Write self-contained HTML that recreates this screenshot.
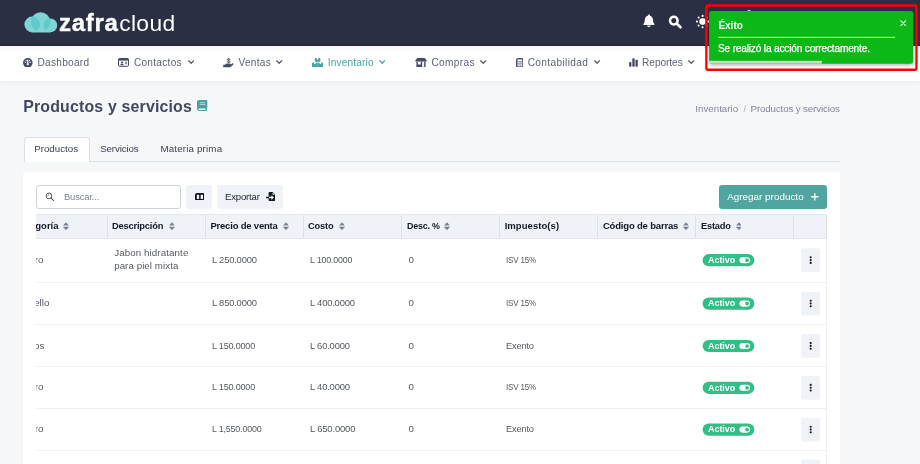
<!DOCTYPE html>
<html lang="es">
<head>
<meta charset="utf-8">
<title>Productos y servicios</title>
<style>
html,body{margin:0;padding:0}
body{width:920px;height:464px;overflow:hidden;position:relative;background:#f6f7f9;font-family:"Liberation Sans",sans-serif}
.a{position:absolute}
.t{position:absolute;white-space:nowrap;line-height:1;font-family:"Liberation Sans",sans-serif}
.hdr{left:0;top:0;width:920px;height:45.6px;background:#2a2f43}
.nav{left:0;top:45.6px;width:920px;height:35.2px;background:linear-gradient(#f6f6f9,#fff 7px);box-shadow:0 1px 4px rgba(40,50,80,.06)}
.card{left:23px;top:172px;width:817px;height:300px;background:#fff;border-radius:3px;box-shadow:0 1px 2px rgba(40,50,80,.04)}
.tabline{left:23.75px;top:161px;width:816.25px;height:1px;background:#dcdfe6}
.tabact{left:24px;top:137px;width:66px;height:25px;box-sizing:border-box;background:#fff;border:1px solid #dcdfe6;border-bottom:none;border-radius:3px 3px 0 0}
.search{left:36.25px;top:185px;width:144.5px;height:24px;box-sizing:border-box;border:1px solid #ced3db;border-radius:3px;background:#fff}
.btnl{background:#eff2f7;border-radius:3px}
.btnp{left:718.75px;top:185px;width:108.25px;height:24px;background:#50a5a1;border-radius:3px}
.thead{left:36.25px;top:214px;width:790.5px;height:24.5px;background:#eff2f7;border-top:1px solid #e3e7ee;border-bottom:1px solid #e3e7ee;box-sizing:border-box}
.vl{top:214.5px;width:1px;height:23.75px;background:#dde1e9}
.hl{left:36.25px;width:790.5px;height:1px;background:#eef0f4}
.badge{left:702.6px;width:51.75px;height:12.2px;border-radius:6.1px;background:#34bd85}
.kb{left:801.1px;width:19px;height:23.8px;border-radius:3px;background:#eff2f7}
.clip{left:36.25px;top:214.5px;width:70px;height:260px;overflow:hidden}
.toastbox{left:705.25px;top:4.75px;width:214px;height:65.75px;box-sizing:border-box;border:2.2px solid #f5000a;border-radius:2px}
.toast{left:709.4px;top:10.8px;width:204px;height:53.2px;background:#0db417;border-radius:3px;overflow:hidden;box-shadow:0 0 6px rgba(0,0,0,.25)}
.tprog{left:0;bottom:0;width:112.5px;height:3.2px;background:#7fd784}
.tsep{left:718.25px;top:36.9px;width:176.75px;height:0.9px;background:#fff}
</style>
</head>
<body>
<div class="a" style="left:0;top:0;width:920px;height:464px;overflow:hidden;will-change:transform">
<div class="a hdr"></div>
<div class="a nav"></div>
<div class="a" style="left:0;top:43.6px;width:920px;height:2px;background:#262b3f"></div>

<!-- logo cloud -->
<svg class="a" style="left:20px;top:8px" width="44" height="30" viewBox="20 8 44 30">
  <defs>
    <clipPath id="cm"><circle cx="40.6" cy="21.9" r="9.6"/></clipPath>
  </defs>
  <g fill="#7fd5d3">
    <circle cx="32.2" cy="24.4" r="7.8"/>
    <circle cx="40.6" cy="21.9" r="9.6"/>
    <circle cx="50.4" cy="25.4" r="6.8"/>
    <rect x="31" y="26" width="20" height="6.4" rx="1"/>
  </g>
  <g fill="#5fcaca" clip-path="url(#cm)">
    <circle cx="32.2" cy="24.4" r="7.8"/>
    <circle cx="50.4" cy="25.4" r="6.8"/>
  </g>
</svg>

<!-- header icons -->
<svg class="a" style="left:642px;top:13px" width="14" height="16" viewBox="0 0 14 16">
  <path fill="#fff" d="M6.9 1.4c.6 0 1 .4 1 .9v.4c1.9.5 3.1 2.100 3.100 4.100 0 2.300.7 3.400 1.400 4.200.3.300.100.900-.4.900H1.800c-.5 0-.7-.6-.4-.9.700-.8 1.400-1.900 1.400-4.200 0-2 1.200-3.600 3.100-4.100v-.4c0-.5.400-.9 1-.9zM5.200 12.600h3.400c0 .9-.8 1.600-1.700 1.600s-1.700-.7-1.700-1.600z"/>
</svg>
<svg class="a" style="left:667px;top:13px" width="17" height="17" viewBox="0 0 17 17">
  <circle cx="6.8" cy="7.6" r="3.8" fill="none" stroke="#fff" stroke-width="2.500"/>
  <path d="M9.900 10.700L13.500 14.200" stroke="#fff" stroke-width="2.700" stroke-linecap="round"/>
</svg>
<svg class="a" style="left:694px;top:13px" width="18" height="18" viewBox="0 0 18 18">
  <g fill="#fff"><circle cx="8.6" cy="8.6" r="3.3"/>
  <circle cx="8.6" cy="2.900" r="1.050"/><circle cx="8.6" cy="14.300" r="1.050"/><circle cx="2.900" cy="8.6" r="1.050"/><circle cx="14.300" cy="8.6" r="1.050"/>
  <circle cx="4.600" cy="4.600" r="1.050"/><circle cx="12.600" cy="4.600" r="1.050"/><circle cx="4.600" cy="12.600" r="1.050"/><circle cx="12.600" cy="12.600" r="1.050"/></g>
</svg>
<div class="a" style="left:747px;top:9.6px;width:3.6px;height:2px;border-radius:2px 2px 0 0;background:#e8e9ee"></div>

<!-- nav icons -->
<!-- dashboard gauge -->
<svg class="a" style="left:23.300px;top:57.600px" width="9.600" height="9.600" viewBox="0 0 20 20">
  <circle cx="10" cy="10" r="10" fill="#454b62"/>
  <g stroke="#fff" stroke-width="1.900" stroke-linecap="round" fill="none">
    <path d="M10 11.500V4.500" stroke-width="2.300"/><path d="M4.200 8.500l1.600.6"/><path d="M15.800 8.500l-1.600.6"/><path d="M6.300 4.800l.9 1.300"/><path d="M13.700 4.800l-.9 1.300"/>
  </g>
  <circle cx="10" cy="13" r="2.300" fill="#fff"/>
</svg>
<!-- id card -->
<svg class="a" style="left:118px;top:58.2px" width="11" height="8.8" viewBox="0 0 22 17.600">
  <rect x="1" y="1" width="20" height="15.600" rx="2.400" fill="none" stroke="#454b62" stroke-width="2"/>
  <rect x="1" y="1" width="20" height="4.200" fill="#454b62"/>
  <circle cx="8" cy="9" r="2.200" fill="#454b62"/>
  <path d="M4.300 14.500c0-2.200 1.600-3.200 3.700-3.200s3.700 1 3.700 3.200z" fill="#454b62"/>
  <rect x="14" y="7.500" width="4.400" height="1.600" fill="#454b62"/><rect x="14" y="10.800" width="4.400" height="1.600" fill="#454b62"/>
</svg>
<!-- hand holding usd -->
<svg class="a" style="left:222.800px;top:57.600px" width="11.200" height="10" viewBox="0 0 22.400 20">
  <path d="M14 3.200C14 1.800 12.800 1.300 11.300 1.300 9.700 1.300 8.700 2 8.700 3.100c0 1.200 1.100 1.600 2.600 2 1.600.4 2.800.8 2.800 2.100 0 1.200-1.200 1.800-2.800 1.800s-2.800-.6-2.800-1.900" fill="none" stroke="#454b62" stroke-width="1.800" stroke-linecap="round"/><path d="M11.300 0v10.300" stroke="#454b62" stroke-width="1.400"/>
  <path fill="#454b62" d="M.4 13.600h3.400l2-1.500c.8-.6 1.700-.9 2.700-.9h5.600c.9 0 1.500.7 1.500 1.500 0 .6-.3 1.100-.8 1.300l3.400-2.900c.7-.6 1.800-.5 2.400.2.500.7.400 1.700-.3 2.200l-5.400 4.400c-.6.500-1.400.8-2.200.8H.4z"/>
</svg>
<!-- boxes -->
<svg class="a" style="left:311.700px;top:57.700px" width="11.200" height="9.300" viewBox="0 0 22.400 18.600">
  <g fill="#48a3a1">
    <path d="M6.600 0h3v3h3.200V0h3c.6 0 1 .4 1 1v5.400c0 .6-.4 1-1 1H6.600c-.6 0-1-.4-1-1V1c0-.6.400-1 1-1z"/>
    <path d="M1 8.800h3v3.200h3.200V8.800h3c.6 0 1 .4 1 1v7.800c0 .6-.4 1-1 1H1c-.6 0-1-.4-1-1V9.800c0-.6.400-1 1-1z"/>
    <path d="M12.200 8.800h3v3.200h3.200V8.800h3c.6 0 1 .4 1 1v7.800c0 .6-.4 1-1 1h-9.200c-.6 0-1-.4-1-1V9.800c0-.6.400-1 1-1z"/>
  </g>
</svg>
<!-- store -->
<svg class="a" style="left:414.600px;top:57.900px" width="12" height="9.400" viewBox="0 0 24 18.800">
  <g fill="#454b62">
    <path d="M4.600 0h14.800l4 4.800c.7 1 0 2.200-1.200 2.200H1.800C.6 7-.1 5.800.6 4.800z"/>
    <path d="M2.800 7h2.800v6.200h6v-6.200h2.800v10.400c0 .8-.6 1.400-1.400 1.400H4.200c-.8 0-1.400-.6-1.400-1.400z"/>
    <rect x="18.300" y="7" width="2.900" height="11.800"/>
  </g>
</svg>
<!-- calculator -->
<svg class="a" style="left:515.600px;top:57.700px" width="7.600" height="9.600" viewBox="0 0 15.200 19.200">
  <rect x="1" y="1" width="13.200" height="17.200" rx="2.200" fill="#8d92a6" stroke="#454b62" stroke-width="2"/>
  <rect x="3.600" y="3.400" width="8" height="3" fill="#fff"/>
  <g fill="#eef0f5"><rect x="3.600" y="8.400" width="2" height="2"/><rect x="6.600" y="8.400" width="2" height="2"/><rect x="9.600" y="8.400" width="2" height="2"/>
  <rect x="3.600" y="11.400" width="2" height="2"/><rect x="6.600" y="11.400" width="2" height="2"/><rect x="9.600" y="11.400" width="2" height="5"/>
  <rect x="3.600" y="14.400" width="5" height="2"/></g>
</svg>
<!-- chart bars -->
<svg class="a" style="left:628.800px;top:58px" width="9" height="9" viewBox="0 0 18 18">
  <g fill="#454b62"><rect x=".2" y="8" width="4.600" height="9.400" rx="1.600"/><rect x="6.600" y=".4" width="4.800" height="17" rx="1.600"/><rect x="13" y="3.600" width="4.600" height="13.800" rx="1.600"/></g>
</svg>
<!-- chevrons -->
<svg class="a" style="left:187.600px;top:60px" width="6.400" height="4.400" viewBox="0 0 12.800 8.800"><path d="M1.400 1.600l5 5 5-5" fill="none" stroke="#555b72" stroke-width="2.500" stroke-linecap="round" stroke-linejoin="round"/></svg>
<svg class="a" style="left:276.200px;top:60px" width="6.400" height="4.400" viewBox="0 0 12.800 8.800"><path d="M1.400 1.600l5 5 5-5" fill="none" stroke="#555b72" stroke-width="2.500" stroke-linecap="round" stroke-linejoin="round"/></svg>
<svg class="a" style="left:379px;top:60px" width="6.400" height="4.400" viewBox="0 0 12.800 8.800"><path d="M1.400 1.600l5 5 5-5" fill="none" stroke="#48a3a1" stroke-width="2.500" stroke-linecap="round" stroke-linejoin="round"/></svg>
<svg class="a" style="left:480.200px;top:60px" width="6.400" height="4.400" viewBox="0 0 12.800 8.800"><path d="M1.400 1.600l5 5 5-5" fill="none" stroke="#555b72" stroke-width="2.500" stroke-linecap="round" stroke-linejoin="round"/></svg>
<svg class="a" style="left:593.700px;top:60px" width="6.400" height="4.400" viewBox="0 0 12.800 8.800"><path d="M1.400 1.600l5 5 5-5" fill="none" stroke="#555b72" stroke-width="2.500" stroke-linecap="round" stroke-linejoin="round"/></svg>
<svg class="a" style="left:688.400px;top:60px" width="6.400" height="4.400" viewBox="0 0 12.800 8.800"><path d="M1.400 1.600l5 5 5-5" fill="none" stroke="#555b72" stroke-width="2.500" stroke-linecap="round" stroke-linejoin="round"/></svg>

<!-- title book icon -->
<svg class="a" style="left:197.400px;top:99.800px" width="10.300" height="11" viewBox="0 0 20 22.800" preserveAspectRatio="none">
  <path fill="#48a3a1" d="M4 0h14c1.100 0 2 .9 2 2v14.500c0 .6-.3 1-.7 1.200-.3 1-.3 2.500 0 3.200.4.300.7.700.7 1.100 0 .5-.4.800-.9.800H4c-2.200 0-4-1.800-4-4V4c0-2.200 1.800-4 4-4z"/>
  <path fill="#fff" d="M4.200 17.600h12.600c-.2.900-.2 2 0 2.900H4.200c-.9 0-1.500-.6-1.500-1.400s.6-1.500 1.500-1.500z"/>
  <rect x="5.400" y="5" width="10.600" height="1.500" fill="#cfe9e7"/><rect x="5.400" y="8.200" width="10.600" height="1.500" fill="#cfe9e7"/>
</svg>

<!-- tabs -->
<div class="a tabline"></div>
<div class="a tabact"></div>

<!-- card -->
<div class="a card"></div>
<div class="a search"></div>
<svg class="a" style="left:45px;top:192px" width="10" height="10" viewBox="0 0 10 10">
  <circle cx="3.950" cy="3.900" r="2.850" fill="none" stroke="#3a3f4e" stroke-width=".85"/>
  <path d="M6.100 6.100l2.400 2.400" stroke="#3a3f4e" stroke-width="1.050" stroke-linecap="round"/>
  <path d="M2.700 3.500a1.400 1.400 0 0 1 1.300-1.100" fill="none" stroke="#3a3f4e" stroke-width=".6" stroke-linecap="round"/>
</svg>
<div class="a btnl" style="left:186.250px;top:185px;width:25.750px;height:24px"></div>
<svg class="a" style="left:194.600px;top:192.500px" width="9.800" height="7.800" viewBox="0 0 19.600 15.600">
  <rect x="1.800" y="1.800" width="16" height="12" rx="2.400" fill="none" stroke="#12151e" stroke-width="3.600"/>
  <rect x="8.300" y="1.800" width="3" height="12" fill="#12151e"/>
</svg>
<div class="a btnl" style="left:217px;top:185px;width:66px;height:24px"></div>
<!-- file export -->
<svg class="a" style="left:266px;top:191.800px" width="9.400" height="9" viewBox="0 0 18.800 18">
  <path fill="#161a24" d="M7.200 0h6.200l5.400 5.400V16c0 1.100-.9 2-2 2H7.200c-1.100 0-2-.9-2-2v-3.600h5.600v2.300c0 .5.600.8 1 .4l3.700-3.500c.3-.3.300-.8 0-1.100L11.800 7c-.4-.4-1-.1-1 .4v2.300H5.200V2c0-1.100.9-2 2-2z"/>
  <rect x="0" y="9.700" width="6" height="2.700" rx=".6" fill="#161a24"/>
  <path fill="#eff2f7" d="M13.200.9v4.700h4.700z"/>
</svg>
<div class="a btnp"></div>
<svg class="a" style="left:811.200px;top:193.200px" width="7.600" height="7.600" viewBox="0 0 15.200 15.200"><path d="M7.600 1.200v12.800M1.200 7.600h12.800" stroke="#fff" stroke-width="2.700" stroke-linecap="round"/></svg>

<!-- table -->
<div class="a thead"></div>
<div class="a vl" style="left:107.250px"></div><div class="a vl" style="left:205.250px"></div><div class="a vl" style="left:303.250px"></div>
<div class="a vl" style="left:401.250px"></div><div class="a vl" style="left:499.250px"></div><div class="a vl" style="left:597.250px"></div>
<div class="a vl" style="left:695.250px"></div><div class="a vl" style="left:793px"></div><div class="a vl" style="left:826px"></div>
<div class="a" style="left:826px;top:238.500px;width:1px;height:236px;background:#eceef3"></div>
<div class="a hl" style="top:282px"></div><div class="a hl" style="top:324px"></div><div class="a hl" style="top:366px"></div>
<div class="a hl" style="top:408px"></div><div class="a hl" style="top:450px"></div>

<svg class="a" style="left:62.90px;top:221.7px" width="5.9" height="8.4" viewBox="0 0 11.8 16.8"><path d="M5.9 .3l5.300 6.100c.3.400.1.800-.4.800H1c-.5 0-.7-.4-.4-.8z" fill="#7b8192"/><path d="M5.900 16.500L.6 10.400c-.3-.4-.1-.8.400-.8h9.800c.5 0 .7.400.4.800z" fill="#7b8192"/></svg>
<svg class="a" style="left:168.80px;top:221.7px" width="5.9" height="8.4" viewBox="0 0 11.8 16.8"><path d="M5.9 .3l5.300 6.100c.3.400.1.800-.4.800H1c-.5 0-.7-.4-.4-.8z" fill="#7b8192"/><path d="M5.900 16.500L.6 10.400c-.3-.4-.1-.8.400-.8h9.800c.5 0 .7.400.4.800z" fill="#7b8192"/></svg>
<svg class="a" style="left:282.70px;top:221.7px" width="5.9" height="8.4" viewBox="0 0 11.8 16.8"><path d="M5.9 .3l5.300 6.100c.3.400.1.800-.4.800H1c-.5 0-.7-.4-.4-.8z" fill="#7b8192"/><path d="M5.900 16.500L.6 10.400c-.3-.4-.1-.8.400-.8h9.800c.5 0 .7.400.4.800z" fill="#7b8192"/></svg>
<svg class="a" style="left:339.30px;top:221.7px" width="5.9" height="8.4" viewBox="0 0 11.8 16.8"><path d="M5.9 .3l5.300 6.100c.3.400.1.800-.4.800H1c-.5 0-.7-.4-.4-.8z" fill="#7b8192"/><path d="M5.900 16.500L.6 10.400c-.3-.4-.1-.8.400-.8h9.800c.5 0 .7.400.4.800z" fill="#7b8192"/></svg>
<svg class="a" style="left:444.30px;top:221.7px" width="5.9" height="8.4" viewBox="0 0 11.8 16.8"><path d="M5.9 .3l5.300 6.100c.3.400.1.800-.4.800H1c-.5 0-.7-.4-.4-.8z" fill="#7b8192"/><path d="M5.900 16.500L.6 10.400c-.3-.4-.1-.8.400-.8h9.800c.5 0 .7.400.4.800z" fill="#7b8192"/></svg>
<svg class="a" style="left:683.00px;top:221.7px" width="5.9" height="8.4" viewBox="0 0 11.8 16.8"><path d="M5.9 .3l5.300 6.100c.3.400.1.800-.4.800H1c-.5 0-.7-.4-.4-.8z" fill="#7b8192"/><path d="M5.900 16.500L.6 10.400c-.3-.4-.1-.8.400-.8h9.800c.5 0 .7.400.4.800z" fill="#7b8192"/></svg>
<svg class="a" style="left:735.50px;top:221.7px" width="5.9" height="8.4" viewBox="0 0 11.8 16.8"><path d="M5.9 .3l5.300 6.100c.3.400.1.800-.4.800H1c-.5 0-.7-.4-.4-.8z" fill="#7b8192"/><path d="M5.900 16.500L.6 10.400c-.3-.4-.1-.8.400-.8h9.800c.5 0 .7.400.4.800z" fill="#7b8192"/></svg>
<svg class="a" style="left:0;top:0" width="920" height="464" viewBox="0 0 920 464">
<rect x="702.6" y="254.10" width="51.75" height="12.2" rx="6.1" fill="#34bd85"/>
<rect x="739.4" y="257.15" width="10.7" height="6.1" rx="3.05" fill="#fff"/>
<circle cx="747.1" cy="260.20" r="1.85" fill="#34bd85"/>
<rect x="801.1" y="248.30" width="19" height="23.8" rx="2.6" fill="#eff2f7"/>
<circle cx="810.7" cy="257.30" r="1.05" fill="#12151e"/>
<circle cx="810.7" cy="260.10" r="1.05" fill="#12151e"/>
<circle cx="810.7" cy="262.90" r="1.05" fill="#12151e"/>
<rect x="702.6" y="297.50" width="51.75" height="12.2" rx="6.1" fill="#34bd85"/>
<rect x="739.4" y="300.55" width="10.7" height="6.1" rx="3.05" fill="#fff"/>
<circle cx="747.1" cy="303.60" r="1.85" fill="#34bd85"/>
<rect x="801.1" y="291.70" width="19" height="23.8" rx="2.6" fill="#eff2f7"/>
<circle cx="810.7" cy="300.70" r="1.05" fill="#12151e"/>
<circle cx="810.7" cy="303.50" r="1.05" fill="#12151e"/>
<circle cx="810.7" cy="306.30" r="1.05" fill="#12151e"/>
<rect x="702.6" y="339.90" width="51.75" height="12.2" rx="6.1" fill="#34bd85"/>
<rect x="739.4" y="342.95" width="10.7" height="6.1" rx="3.05" fill="#fff"/>
<circle cx="747.1" cy="346.00" r="1.85" fill="#34bd85"/>
<rect x="801.1" y="334.10" width="19" height="23.8" rx="2.6" fill="#eff2f7"/>
<circle cx="810.7" cy="343.10" r="1.05" fill="#12151e"/>
<circle cx="810.7" cy="345.90" r="1.05" fill="#12151e"/>
<circle cx="810.7" cy="348.70" r="1.05" fill="#12151e"/>
<rect x="702.6" y="381.70" width="51.75" height="12.2" rx="6.1" fill="#34bd85"/>
<rect x="739.4" y="384.75" width="10.7" height="6.1" rx="3.05" fill="#fff"/>
<circle cx="747.1" cy="387.80" r="1.85" fill="#34bd85"/>
<rect x="801.1" y="375.90" width="19" height="23.8" rx="2.6" fill="#eff2f7"/>
<circle cx="810.7" cy="384.90" r="1.05" fill="#12151e"/>
<circle cx="810.7" cy="387.70" r="1.05" fill="#12151e"/>
<circle cx="810.7" cy="390.50" r="1.05" fill="#12151e"/>
<rect x="702.6" y="423.50" width="51.75" height="12.2" rx="6.1" fill="#34bd85"/>
<rect x="739.4" y="426.55" width="10.7" height="6.1" rx="3.05" fill="#fff"/>
<circle cx="747.1" cy="429.60" r="1.85" fill="#34bd85"/>
<rect x="801.1" y="417.70" width="19" height="23.8" rx="2.6" fill="#eff2f7"/>
<circle cx="810.7" cy="426.70" r="1.05" fill="#12151e"/>
<circle cx="810.7" cy="429.50" r="1.05" fill="#12151e"/>
<circle cx="810.7" cy="432.30" r="1.05" fill="#12151e"/>
<rect x="801.1" y="459.60" width="19" height="23.8" rx="2.6" fill="#eff2f7"/>
<circle cx="810.7" cy="468.60" r="1.05" fill="#12151e"/>
<circle cx="810.7" cy="471.40" r="1.05" fill="#12151e"/>
<circle cx="810.7" cy="474.20" r="1.05" fill="#12151e"/>
</svg>

<!-- clipped first column -->
<div class="a clip">
<span class="t" style="left:-21.55px;top:6.50px;font-size:9.5px;font-weight:700;color:#141826;letter-spacing:0.0px;">Categoría</span>
<span class="t" style="left:-21.63px;top:40.50px;font-size:9.75px;font-weight:400;color:#555965;letter-spacing:0.0px;">Rostro</span>
<span class="t" style="left:-19.99px;top:83.50px;font-size:9.75px;font-weight:400;color:#555965;letter-spacing:0.0px;">Cabello</span>
<span class="t" style="left:-20.64px;top:126.50px;font-size:9.75px;font-weight:400;color:#555965;letter-spacing:0.0px;">Labios</span>
<span class="t" style="left:-21.63px;top:167.50px;font-size:9.75px;font-weight:400;color:#555965;letter-spacing:0.0px;">Rostro</span>
<span class="t" style="left:-21.63px;top:209.50px;font-size:9.75px;font-weight:400;color:#555965;letter-spacing:0.0px;">Rostro</span>
</div>

<span class="t" style="left:59.08px;top:12.00px;font-size:23.5px;font-weight:700;color:#fff;letter-spacing:0.7px;-webkit-text-stroke:.35px #fff;transform:scaleX(1.0220);transform-origin:0 0;">zafra</span>
<span class="t" style="left:119.20px;top:12.00px;font-size:22.8px;font-weight:400;color:#fff;letter-spacing:0.349px;">cloud</span>
<span class="t" style="left:37.55px;top:58.00px;font-size:10.1px;font-weight:400;color:#5c6279;letter-spacing:0.271px;">Dashboard</span>
<span class="t" style="left:133.90px;top:58.00px;font-size:10.1px;font-weight:400;color:#5c6279;letter-spacing:0.282px;">Contactos</span>
<span class="t" style="left:238.40px;top:58.00px;font-size:10.1px;font-weight:400;color:#5c6279;letter-spacing:0.316px;">Ventas</span>
<span class="t" style="left:327.65px;top:58.00px;font-size:10.1px;font-weight:400;color:#48a3a1;letter-spacing:0.181px;">Inventario</span>
<span class="t" style="left:431.40px;top:58.00px;font-size:10.1px;font-weight:400;color:#5c6279;letter-spacing:0.376px;">Compras</span>
<span class="t" style="left:527.65px;top:58.00px;font-size:10.1px;font-weight:400;color:#5c6279;letter-spacing:0.371px;">Contabilidad</span>
<span class="t" style="left:642.05px;top:58.00px;font-size:10.1px;font-weight:400;color:#5c6279;letter-spacing:-0.037px;">Reportes</span>
<span class="t" style="left:23.19px;top:99.00px;font-size:15.9px;font-weight:700;color:#414860;letter-spacing:0.173px;">Productos y servicios</span>
<span class="t" style="left:695.26px;top:104.00px;font-size:9.75px;font-weight:400;color:#82879d;letter-spacing:0.006px;">Inventario</span>
<span class="t" style="left:743.46px;top:104.00px;font-size:9.75px;font-weight:400;color:#a9aec0;letter-spacing:0px;">/</span>
<span class="t" style="left:750.56px;top:104.00px;font-size:9.75px;font-weight:400;color:#82879d;letter-spacing:-0.137px;">Productos y servicios</span>
<span class="t" style="left:34.16px;top:144.00px;font-size:9.75px;font-weight:400;color:#3b4256;letter-spacing:0.003px;">Productos</span>
<span class="t" style="left:100.16px;top:144.00px;font-size:9.75px;font-weight:400;color:#3b4256;letter-spacing:-0.141px;">Servicios</span>
<span class="t" style="left:160.41px;top:144.00px;font-size:9.75px;font-weight:400;color:#3b4256;letter-spacing:0.173px;">Materia prima</span>
<span class="t" style="left:63.56px;top:192.00px;font-size:9.75px;font-weight:400;color:#7f849a;letter-spacing:-0.2px;transform:scaleX(0.9655);transform-origin:0 0;">Buscar...</span>
<span class="t" style="left:225.41px;top:192.00px;font-size:9.75px;font-weight:400;color:#1f2331;letter-spacing:-0.2px;transform:scaleX(0.9851);transform-origin:0 0;">Exportar</span>
<span class="t" style="left:727.16px;top:192.00px;font-size:9.8px;font-weight:400;color:#fff;letter-spacing:0.049px;">Agregar producto</span>
<span class="t" style="left:112.17px;top:221.00px;font-size:9.5px;font-weight:700;color:#141826;letter-spacing:-0.2px;transform:scaleX(0.9814);transform-origin:0 0;">Descripción</span>
<span class="t" style="left:210.42px;top:221.00px;font-size:9.5px;font-weight:700;color:#141826;letter-spacing:-0.2px;">Precio de venta</span>
<span class="t" style="left:308.42px;top:221.00px;font-size:9.5px;font-weight:700;color:#141826;letter-spacing:-0.2px;transform:scaleX(0.9825);transform-origin:0 0;">Costo</span>
<span class="t" style="left:406.67px;top:221.00px;font-size:9.5px;font-weight:700;color:#141826;letter-spacing:-0.2px;transform:scaleX(0.9341);transform-origin:0 0;">Desc. %</span>
<span class="t" style="left:504.67px;top:221.00px;font-size:9.5px;font-weight:700;color:#141826;letter-spacing:0.057px;">Impuesto(s)</span>
<span class="t" style="left:602.92px;top:221.00px;font-size:9.5px;font-weight:700;color:#141826;letter-spacing:-0.181px;">Código de barras</span>
<span class="t" style="left:700.92px;top:221.00px;font-size:9.5px;font-weight:700;color:#141826;letter-spacing:-0.2px;transform:scaleX(0.9748);transform-origin:0 0;">Estado</span>
<span class="t" style="left:212.16px;top:255.00px;font-size:9.75px;font-weight:400;color:#555965;letter-spacing:-0.2px;transform:scaleX(0.9634);transform-origin:0 0;">L 250.0000</span>
<span class="t" style="left:310.41px;top:255.00px;font-size:9.75px;font-weight:400;color:#555965;letter-spacing:-0.2px;transform:scaleX(0.9098);transform-origin:0 0;">L 100.0000</span>
<span class="t" style="left:408.41px;top:255.00px;font-size:9.75px;font-weight:400;color:#555965;letter-spacing:0px;">0</span>
<span class="t" style="left:506.41px;top:255.00px;font-size:9.75px;font-weight:400;color:#555965;letter-spacing:-0.2px;transform:scaleX(0.8212);transform-origin:0 0;">ISV 15%</span>
<span class="t" style="left:212.16px;top:298.00px;font-size:9.75px;font-weight:400;color:#555965;letter-spacing:-0.2px;transform:scaleX(0.9634);transform-origin:0 0;">L 850.0000</span>
<span class="t" style="left:310.41px;top:298.00px;font-size:9.75px;font-weight:400;color:#555965;letter-spacing:-0.2px;transform:scaleX(0.9634);transform-origin:0 0;">L 400.0000</span>
<span class="t" style="left:408.41px;top:298.00px;font-size:9.75px;font-weight:400;color:#555965;letter-spacing:0px;">0</span>
<span class="t" style="left:506.41px;top:298.00px;font-size:9.75px;font-weight:400;color:#555965;letter-spacing:-0.2px;transform:scaleX(0.8212);transform-origin:0 0;">ISV 15%</span>
<span class="t" style="left:212.16px;top:341.00px;font-size:9.75px;font-weight:400;color:#555965;letter-spacing:-0.2px;transform:scaleX(0.9259);transform-origin:0 0;">L 150.0000</span>
<span class="t" style="left:310.41px;top:341.00px;font-size:9.75px;font-weight:400;color:#555965;letter-spacing:-0.2px;transform:scaleX(0.9642);transform-origin:0 0;">L 60.0000</span>
<span class="t" style="left:408.41px;top:341.00px;font-size:9.75px;font-weight:400;color:#555965;letter-spacing:0px;">0</span>
<span class="t" style="left:506.41px;top:341.00px;font-size:9.75px;font-weight:400;color:#555965;letter-spacing:-0.2px;transform:scaleX(0.9514);transform-origin:0 0;">Exento</span>
<span class="t" style="left:212.16px;top:382.00px;font-size:9.75px;font-weight:400;color:#555965;letter-spacing:-0.2px;transform:scaleX(0.9259);transform-origin:0 0;">L 150.0000</span>
<span class="t" style="left:310.41px;top:382.00px;font-size:9.75px;font-weight:400;color:#555965;letter-spacing:-0.2px;transform:scaleX(0.9642);transform-origin:0 0;">L 40.0000</span>
<span class="t" style="left:408.41px;top:382.00px;font-size:9.75px;font-weight:400;color:#555965;letter-spacing:0px;">0</span>
<span class="t" style="left:506.41px;top:382.00px;font-size:9.75px;font-weight:400;color:#555965;letter-spacing:-0.2px;transform:scaleX(0.8212);transform-origin:0 0;">ISV 15%</span>
<span class="t" style="left:212.16px;top:424.00px;font-size:9.75px;font-weight:400;color:#555965;letter-spacing:-0.2px;transform:scaleX(0.9136);transform-origin:0 0;">L 1,550.0000</span>
<span class="t" style="left:310.41px;top:424.00px;font-size:9.75px;font-weight:400;color:#555965;letter-spacing:-0.2px;transform:scaleX(0.9742);transform-origin:0 0;">L 650.0000</span>
<span class="t" style="left:408.41px;top:424.00px;font-size:9.75px;font-weight:400;color:#555965;letter-spacing:0px;">0</span>
<span class="t" style="left:506.41px;top:424.00px;font-size:9.75px;font-weight:400;color:#555965;letter-spacing:-0.2px;transform:scaleX(0.9514);transform-origin:0 0;">Exento</span>
<span class="t" style="left:114.16px;top:248.00px;font-size:9.75px;font-weight:400;color:#555965;letter-spacing:0.103px;">Jabon hidratante</span>
<span class="t" style="left:114.16px;top:261.00px;font-size:9.75px;font-weight:400;color:#555965;letter-spacing:0.055px;">para piel mixta</span>
<span class="t" style="left:708.08px;top:256.00px;font-size:9.0px;font-weight:700;color:#fff;letter-spacing:-0.077px;">Activo</span>
<span class="t" style="left:708.08px;top:299.00px;font-size:9.0px;font-weight:700;color:#fff;letter-spacing:-0.077px;">Activo</span>
<span class="t" style="left:708.08px;top:342.00px;font-size:9.0px;font-weight:700;color:#fff;letter-spacing:-0.077px;">Activo</span>
<span class="t" style="left:708.08px;top:384.00px;font-size:9.0px;font-weight:700;color:#fff;letter-spacing:-0.077px;">Activo</span>
<span class="t" style="left:708.08px;top:425.00px;font-size:9.0px;font-weight:700;color:#fff;letter-spacing:-0.077px;">Activo</span>

<!-- toast -->
<svg class="a" style="left:700px;top:0" width="220" height="76" viewBox="700 0 220 76">
  <defs><clipPath id="tc"><rect x="709.1" y="10.9" width="204.2" height="52.8" rx="2.4"/></clipPath>
  <filter id="ts" x="-5%" y="-20%" width="110%" height="150%"><feGaussianBlur stdDeviation="1.6"/></filter></defs>
  <rect x="709.6" y="13" width="203.2" height="52.4" rx="2.4" fill="#000" opacity=".28" filter="url(#ts)"/>
  <g clip-path="url(#tc)">
    <rect x="709" y="10" width="205" height="54" fill="#0cb818"/>
    <rect x="709" y="60.8" width="112.8" height="3" fill="#bfeac2"/>
  </g>
  <rect x="718.3" y="36.85" width="176.7" height=".9" fill="#fff"/>
  <rect x="706.35" y="5.5" width="210.1" height="64.25" rx="1.2" fill="none" stroke="#ff0000" stroke-width="2.300"/>
</svg>
<svg class="a" style="left:899.800px;top:19.800px" width="6.400" height="6.400" viewBox="0 0 12.800 12.800"><path d="M1.400 1.400l10 10M11.400 1.400l-10 10" stroke="#e4f6e5" stroke-width="2.100" stroke-linecap="round"/></svg>
<span class="t" style="left:718.40px;top:21.00px;font-size:10px;font-weight:700;color:#fff;letter-spacing:-0.001px;">Éxito</span>
<span class="t" style="left:717.92px;top:43.00px;font-size:10.8px;font-weight:400;color:#fff;letter-spacing:-0.2px;-webkit-text-stroke:.25px #fff;transform:scaleX(0.9389);transform-origin:0 0;">Se realizó la acción correctamente.</span>
</div>
</body>
</html>
